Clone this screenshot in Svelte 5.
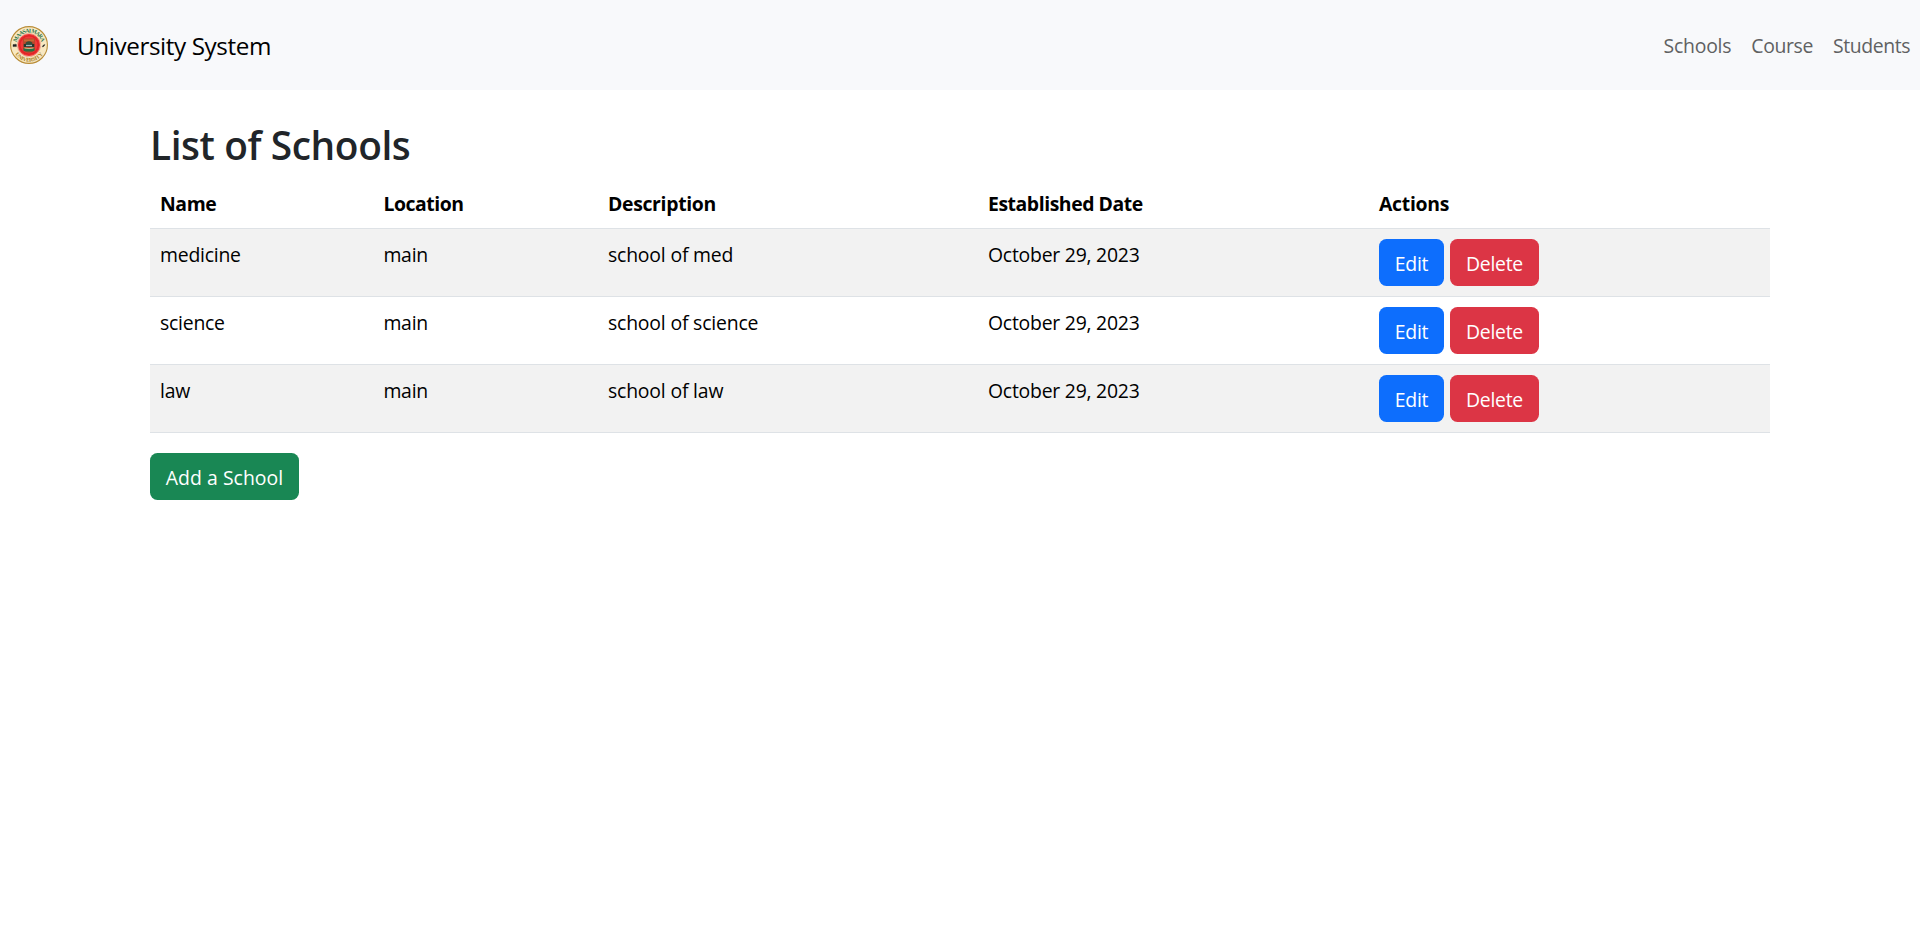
<script>
  const links = [
    { label: 'Schools', track: -0.22 },
    { label: 'Course', track: -0.36 },
    { label: 'Students', track: -0.4 }
  ];
  const columns = [
    { label: 'Name', track: -0.4 },
    { label: 'Location', track: -0.44 },
    { label: 'Description', track: -0.32 },
    { label: 'Established Date', track: -0.44 },
    { label: 'Actions', track: -0.28 }
  ];
  const schools = [
    { name: 'medicine', location: 'main', description: 'school of med' },
    { name: 'science', location: 'main', description: 'school of science' },
    { name: 'law', location: 'main', description: 'school of law' }
  ];
  const established = 'October 29, 2023';
</script>

<nav class="navbar">
  <a class="brand" href="#home">
    <svg class="logo" viewBox="0 0 38 38" aria-hidden="true">
      <defs>
        <path id="arc-top" d="M6 19.5a13 13 0 0 1 26 0" />
        <path id="arc-bottom" d="M2.3 19a16.7 16.7 0 0 0 33.4 0" />
      </defs>
      <circle cx="19" cy="19" r="18.4" fill="#f8e8c1" stroke="#b98d38" stroke-width="1.1" />
      <circle cx="19" cy="19" r="11.6" fill="#f03a38" stroke="#efb9a0" stroke-width="1" />
      <circle cx="19" cy="19" r="9.3" fill="none" stroke="#e02427" stroke-width="1.6" />
      <path d="M13 12.6h12v9.4c0 3-2 4.4-6 5-4-.6-6-2-6-5z" fill="#b9472c" />
      <path d="M14 13.4h10v2h-10z" fill="#c66b35" />
      <path d="M15.5 18c0-2 1.3-2.8 3.5-2.8s3.5.8 3.5 2.8z" fill="#344e38" />
      <path d="M13.8 18h10.4v3H13.8z" fill="#25382f" />
      <path d="M16 18.8h6v1.4h-6z" fill="#9bb9bb" />
      <path d="M13.5 22q5.5 1.7 11 0v2.7q-5.5 1.7-11 0z" fill="#287044" />
      <path d="M14.5 22q4.5 1.2 9 0" fill="none" stroke="#d8d8a0" stroke-width=".8" />
      <path d="M3 18.6h3.4v2H3zM4.8 18l1.4.5M32.2 20.8l1-1.6 1.7-.7-.7 1.4-1 .8z" fill="#222" stroke="#222" stroke-width=".4" />
      <text class="seal green"><textPath href="#arc-top" startOffset="50%" text-anchor="middle" textLength="34">MAASAI MARA</textPath></text>
      <text class="seal gold"><textPath href="#arc-bottom" startOffset="50%" text-anchor="middle" textLength="33">UNIVERSITY</textPath></text>
    </svg>
    <span class="title">University System</span>
  </a>
  <div class="links">
    {#each links as link}
      <a href="#{link.label}" style:letter-spacing="{link.track}px">{link.label}</a>
    {/each}
  </div>
</nav>

<main class="container">
  <h2>List of Schools</h2>
  <table>
    <colgroup>
      <col class="c1" /><col class="c2" /><col class="c3" /><col class="c4" /><col />
    </colgroup>
    <thead>
      <tr>
        {#each columns as column}
          <th style:letter-spacing="{column.track}px">{column.label}</th>
        {/each}
      </tr>
    </thead>
    <tbody>
      {#each schools as school}
        <tr>
          <td>{school.name}</td>
          <td>{school.location}</td>
          <td class="description">{school.description}</td>
          <td>{established}</td>
          <td class="controls">
            <div class="actions">
              <button class="btn edit">Edit</button>
              <button class="btn delete">Delete</button>
            </div>
          </td>
        </tr>
      {/each}
    </tbody>
  </table>
  <button class="btn add">Add a School</button>
</main>

<style>
  :global(body) {
    margin: 0;
    background: #fff;
    color: #212529;
    font: 400 19.4px/30px "Open Sans", "Noto Sans", sans-serif;
  }
  a { text-decoration: none; }
  .navbar {
    box-sizing: border-box;
    height: 90px;
    padding: 0 10px;
    display: flex;
    align-items: center;
    justify-content: space-between;
    background: #f8f9fb;
  }
  .brand {
    display: flex;
    align-items: center;
    gap: 29px;
    color: #000;
  }
  .logo { width: 38px; height: 38px; display: block; overflow: visible; }
  .seal { font: 700 5.6px "Liberation Serif", serif; }
  .green { fill: #28734a; }
  .gold { fill: #a98127; }
  .title {
    font-size: 24.25px;
    letter-spacing: -0.4px;
    padding-top: 2px;
  }
  .links { display: flex; gap: 20px; padding-top: 2px; }
  .links a { color: #606162; }
  .container { width: 1620px; margin: 0 auto; padding-top: 30px; }
  h2 {
    margin: 1px 0 9px;
    font-size: 38.8px;
    line-height: 48px;
    font-weight: 600;
    letter-spacing: -0.4px;
  }
  table {
    width: 1620px;
    table-layout: fixed;
    border-collapse: separate;
    border-spacing: 0;
    color: #000;
    margin-bottom: 20px;
  }
  .c1 { width: 223.4px; }
  .c2 { width: 224.6px; }
  .c3 { width: 380px; }
  .c4 { width: 391px; }
  th, td {
    padding: 11px 10px 9px;
    text-align: left;
    vertical-align: top;
    border-bottom: 1px solid #dee2e6;
  }
  th { font-weight: 700; }
  td { letter-spacing: -0.23px; }
  td.description { letter-spacing: -0.18px; }
  td.controls { padding: 10px; }
  tbody tr:nth-child(odd) td { background: #f2f2f2; }
  .actions { display: flex; gap: 6px; }
  .btn {
    display: block;
    box-sizing: border-box;
    height: 47px;
    padding: 2px 0 0;
    border: 0;
    border-radius: 7.5px;
    color: #fff;
    font: inherit;
    text-align: center;
  }
  .edit { width: 65px; background: #0d6efd; letter-spacing: -0.2px; }
  .delete { width: 89px; background: #dc3545; letter-spacing: -0.26px; }
  .add { width: 149px; background: #198754; letter-spacing: 0.05px; }
</style>
